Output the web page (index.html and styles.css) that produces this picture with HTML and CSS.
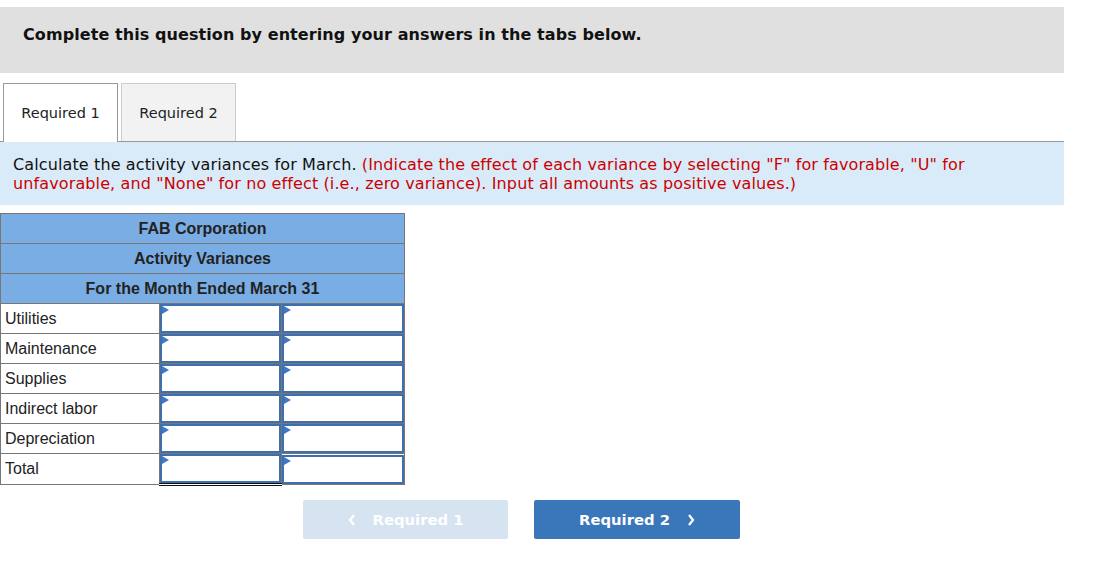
FILE: index.html
```html
<!DOCTYPE html>
<html>
<head>
<meta charset="utf-8">
<link rel="stylesheet" href="styles.css">
</head>
<body>
<div class="page">
  <div class="banner">Complete this question by entering your answers in the tabs below.</div>
  <div class="tabs">
    <div class="tab active">Required 1</div>
    <div class="tab">Required 2</div>
  </div>
  <div class="instructions">Calculate the activity variances for March. <span class="red">(Indicate the effect of each variance by selecting "F" for favorable, "U" for unfavorable, and "None" for no effect (i.e., zero variance). Input all amounts as positive values.)</span></div>
  <table class="sheet">
    <tr class="head"><td colspan="3">FAB Corporation</td></tr>
    <tr class="head"><td colspan="3">Activity Variances</td></tr>
    <tr class="head"><td colspan="3">For the Month Ended March 31</td></tr>
    <tr class="row"><td class="label">Utilities</td><td class="cell"><div class="inp"></div></td><td class="cell"><div class="inp"></div></td></tr>
    <tr class="row"><td class="label">Maintenance</td><td class="cell"><div class="inp"></div></td><td class="cell"><div class="inp"></div></td></tr>
    <tr class="row"><td class="label">Supplies</td><td class="cell"><div class="inp"></div></td><td class="cell"><div class="inp"></div></td></tr>
    <tr class="row"><td class="label">Indirect labor</td><td class="cell"><div class="inp"></div></td><td class="cell"><div class="inp"></div></td></tr>
    <tr class="row"><td class="label">Depreciation</td><td class="cell"><div class="inp"></div></td><td class="cell"><div class="inp"></div></td></tr>
    <tr class="total"><td class="label">Total</td><td class="cell tot"><div class="inp"></div></td><td class="cell"><div class="inp"></div></td></tr>
  </table>
  <div class="nav">
    <button class="btn prev"><svg class="chev" width="8" height="12" viewBox="0 0 8 12"><polyline points="6,1 2,6 6,11" fill="none" stroke="#fff" stroke-width="2.2"/></svg>Required 1</button>
    <button class="btn next">Required 2<svg class="chev" width="8" height="12" viewBox="0 0 8 12"><polyline points="2,1 6,6 2,11" fill="none" stroke="#fff" stroke-width="2.2"/></svg></button>
  </div>
</div>
</body>
</html>
```
FILE: styles.css
```css
html, body { margin: 0; padding: 0; background: #fff; }
.page { padding-top: 7px; width: 1064px; }
.banner {
  background: #e0e0e0;
  height: 66px;
  box-sizing: border-box;
  padding: 18px 0 0 23px;
  font-family: "DejaVu Sans", Verdana, sans-serif;
  font-weight: bold;
  font-size: 16px;
  letter-spacing: 0.08px;
  color: #111;
}
.tabs {
  display: flex;
  gap: 3px;
  margin-top: 10px;
  padding-left: 3px;
  border-bottom: 1px solid #999;
}
.tab {
  width: 115px;
  height: 58px;
  box-sizing: border-box;
  border: 1px solid #ccc;
  border-bottom: none;
  background: #f2f2f2;
  font-family: "DejaVu Sans", Verdana, sans-serif;
  font-size: 14.5px;
  color: #222;
  display: flex;
  align-items: center;
  justify-content: center;
}
.tab.active {
  background: #fff;
  border-color: #999;
  margin-bottom: -1px;
  height: 59px;
}
.instructions {
  background: #d9ebf9;
  height: 63px;
  box-sizing: border-box;
  padding: 13px 13px 0 13px;
  font-family: "DejaVu Sans", Verdana, sans-serif;
  font-size: 16px;
  letter-spacing: 0.12px;
  line-height: 19px;
  color: #111;
}
.red { color: #c00; }
.sheet {
  margin-top: 8px;
  border-collapse: collapse;
  width: 405px;
  font-family: "Liberation Sans", Arial, sans-serif;
  font-size: 16px;
  color: #222;
}
.sheet td { border: 1px solid #777; padding: 0; }
.head td {
  background: #7aade3;
  text-align: center;
  font-weight: bold;
  height: 29px;
}
.row td { height: 29px; }
.label { width: 154px; padding-left: 4px !important; }
.cell { width: 122px; }
.inp {
  height: 25px;
  border: 2px solid #3f6fad;
  background: #fff;
  position: relative;
}
.inp::before {
  content: "";
  position: absolute;
  left: 0;
  top: 0;
  border-left: 7px solid #3f79c6;
  border-top: 4px solid transparent;
  border-bottom: 4px solid transparent;
}
.total td { height: 29px; }
.total .inp { height: 25px; }
.tot { border-top: 1px solid #111 !important; border-bottom: 3px double #111 !important; }
.nav {
  display: flex;
  gap: 26px;
  margin-top: 14px;
  padding-left: 303px;
}
.btn {
  width: 206px;
  height: 39px;
  border: none;
  border-radius: 2px;
  font-family: "DejaVu Sans", Verdana, sans-serif;
  font-weight: bold;
  font-size: 14.8px;
  color: #fff;
  display: flex;
  align-items: center;
  justify-content: center;
  gap: 17px;
  padding: 0;
}
.prev { background: #d6e3f1; width: 205px; }
.next { background: #3a76ba; }
.chev { display: block; }
```
